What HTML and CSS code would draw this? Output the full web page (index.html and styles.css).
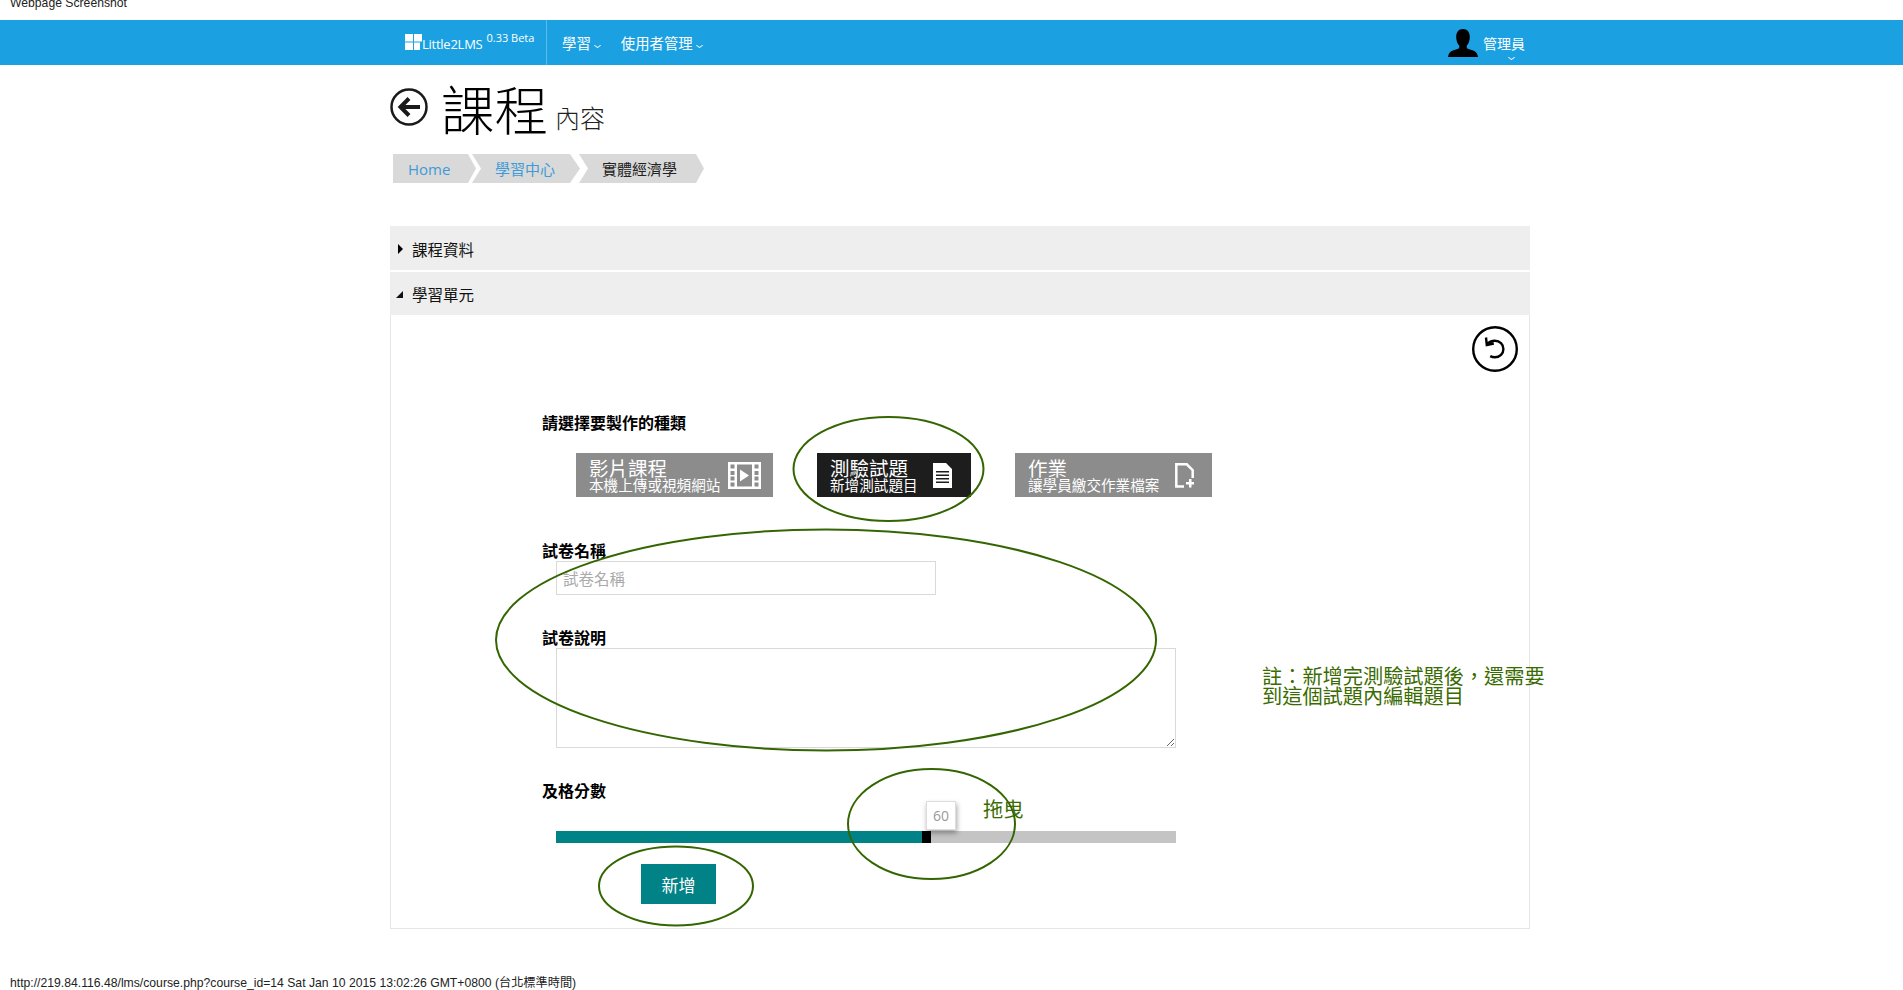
FILE: index.html
```html
<!DOCTYPE html>
<html lang="zh-Hant">
<head>
<meta charset="utf-8">
<title>課程內容</title>
<link rel="stylesheet" href="styles.css">
</head>
<body>
<p class="shot-caption">Webpage Screenshot</p>
<header class="topbar">
  <div class="topbar-inner">
    <a class="brand">
      <svg class="brand-logo" viewBox="0 0 17 16"><path fill="#fff" d="M0 0h8v7.500H0zM9 0h8v7.500H9zM0 8.500h8V16H0zM9 8.500h6V16H9z"/></svg>
      <span class="brand-name">Little2LMS</span><sup class="brand-ver">0.33 Beta</sup>
    </a>
    <nav class="menu">
      <a class="menu-item">學習<span class="caret"></span></a>
      <a class="menu-item">使用者管理<span class="caret"></span></a>
    </nav>
    <div class="user">
      <svg class="avatar" viewBox="0 0 30 28"><path fill="#000" d="M15 0c4.600 0 6.800 3.400 6.800 8 0 3.600-1.200 6.800-3 8.600v2.600c2 1.300 6 1.800 8.300 3.300 1.600 1 2.500 3 2.900 5.500H0c.4-2.500 1.300-4.500 2.900-5.500 2.300-1.500 6.300-2 8.300-3.300v-2.600c-1.800-1.800-3-5-3-8.600C8.200 3.400 10.400 0 15 0z"/></svg>
      <span class="user-name">管理員<span class="caret caret-below"></span></span>
    </div>
  </div>
</header>

<main class="page">
  <div class="title-row">
    <svg class="back-icon" viewBox="0 0 38 38"><circle cx="19" cy="19" r="17.500" fill="none" stroke="#1a1a1a" stroke-width="2.500"/><path fill="none" stroke="#1a1a1a" stroke-width="4" d="M30 19H11M19 10.500 10.500 19l8.500 8.500"/></svg>
    <h1 class="title">課程<small class="subtitle">內容</small></h1>
  </div>
  <ol class="crumbs">
    <li class="crumb crumb-first"><a class="crumb-link">Home</a></li>
    <li class="crumb crumb-second"><a class="crumb-link">學習中心</a></li>
    <li class="crumb crumb-third">實體經濟學</li>
  </ol>

  <section class="accordion">
    <h2 class="acc-head acc-closed"><span class="tri tri-right"></span>課程資料</h2>
    <h2 class="acc-head acc-open"><span class="tri tri-open"></span>學習單元</h2>
    <div class="acc-body">
      <div class="undo-row">
        <svg class="undo-icon" viewBox="0 0 46 46"><circle cx="23" cy="23" r="21.800" fill="none" stroke="#000" stroke-width="2.400"/><path fill="none" stroke="#000" stroke-width="2.400" d="M15 18.500c2-2.500 5-3.700 8-3.700 4.800 0 8.400 3.700 8.400 8.200s-3.600 8.300-8.400 8.300c-1.800 0-3.400-.4-4.800-1.200M14 11.500l.8 7.500 7-1.500"/></svg>
      </div>
      <form class="form">
        <label class="form-label label-type">請選擇要製作的種類</label>
        <div class="tiles">
          <a class="tile tile-video">
            <span class="tile-text"><span class="tile-title">影片課程</span><span class="tile-sub">本機上傳或視頻網站</span></span>
            <svg class="tile-icon icon-film" viewBox="0 0 33 27"><path fill="#fff" fill-rule="evenodd" d="M0 0h33v27H0zM2.500 2.500v4h4v-4zM2.500 9v4h4V9zM2.500 14.500v4h4v-4zM2.500 20.500v4h4v-4zM26.500 2.500v4h4v-4zM26.500 9v4h4V9zM26.500 14.500v4h4v-4zM26.500 20.500v4h4v-4zM9 2.500v22h15v-22z"/><path fill="#fff" d="M12 7.500 21 13.500 12 19.500z"/></svg>
          </a>
          <a class="tile tile-active">
            <span class="tile-text"><span class="tile-title">測驗試題</span><span class="tile-sub">新增測試題目</span></span>
            <svg class="tile-icon icon-doc" viewBox="0 0 19 25"><path fill="#fff" fill-rule="evenodd" d="M0 0h13l6 6v19H0zM3 8v1.500h13V8zM3 11.500V13h13v-1.500zM3 15v1.500h13V15zM3 18.500V20h13v-1.500z"/></svg>
          </a>
          <a class="tile tile-homework">
            <span class="tile-text"><span class="tile-title">作業</span><span class="tile-sub">讓學員繳交作業檔案</span></span>
            <svg class="tile-icon icon-add" viewBox="0 0 19 25"><path fill="none" stroke="#fff" stroke-width="2.500" d="M9 23.500H1.300V1.300h10.500l5.900 5.900V15"/><path fill="#fff" d="M14 16h2.500v3H19.500v2.500h-3v3H14v-3h-3V19h3z"/></svg>
          </a>
        </div>
        <label class="form-label label-name">試卷名稱</label>
        <input class="text-input" type="text" placeholder="試卷名稱">
        <label class="form-label label-desc">試卷說明</label>
        <textarea class="text-area"></textarea>
        <label class="form-label label-score">及格分數</label>
        <div class="slider">
          <div class="slider-fill" style="width:366px"></div>
          <div class="slider-handle"><span class="slider-tip">60</span></div>
        </div>
        <button class="submit" type="button">新增</button>
      </form>
    </div>
  </section>
</main>

<footer class="shot-footer">http://219.84.116.48/lms/course.php?course_id=14 Sat Jan 10 2015 13:02:26 GMT+0800 (台北標準時間)</footer>

<svg class="marks" viewBox="0 0 1903 990">
  <ellipse cx="888.500" cy="469" rx="95" ry="52"/>
  <ellipse cx="826" cy="640" rx="330" ry="110.500"/>
  <ellipse cx="931.500" cy="824" rx="83.500" ry="55"/>
  <ellipse cx="676" cy="886" rx="77" ry="39.500"/>
</svg>
<p class="note note-main">註：新增完測驗試題後，還需要<br>到這個試題內編輯題目</p>
<p class="note note-drag">拖曳</p>
</body>
</html>
```
FILE: styles.css
```css
* { box-sizing: border-box; }
html, body { margin: 0; padding: 0; }
body {
  position: relative;
  width: 1903px;
  height: 990px;
  overflow: hidden;
  background: #fff;
  color: #000;
  font-family: "Noto Sans CJK TC", "Liberation Sans", sans-serif;
}
.shot-caption {
  height: 20px;
  margin: 0;
  padding-left: 10px;
  font: 12.200px/7px "Liberation Sans", "Noto Sans CJK TC", sans-serif;
  color: #222;
  overflow: hidden;
}
.topbar { height: 45px; background: #1ba1e2; color: #fff; }
.topbar-inner {
  display: flex;
  align-items: stretch;
  width: 1140px;
  height: 45px;
  margin-left: 390px;
}
.brand {
  display: flex;
  align-items: flex-start;
  width: 157px;
  padding: 14px 0 0 15px;
  border-right: 1px solid #5cbbe9;
  font-family: "Open Sans", "Noto Sans CJK TC", sans-serif;
}
.brand-logo { width: 17px; height: 16px; flex: none; }
.brand-name { font-size: 13px; line-height: 20px; letter-spacing: -.25px; }
.brand-ver { font-size: 11px; line-height: 14px; margin: -3px 0 0 4px; }
.menu { display: flex; align-items: center; gap: 21px; padding-left: 15px; }
.menu-item { font-size: 14.400px; line-height: 20px; padding-top: 1px; }
.caret {
  display: inline-block;
  width: 5px;
  height: 5px;
  margin: 0 0 1px 4px;
  border-right: 1px solid #fff;
  border-bottom: 1px solid #fff;
  transform: scaleY(.7) rotate(45deg);
}
.user { display: flex; align-items: flex-start; margin-left: auto; padding: 9px 5px 0 0; }
.avatar { width: 30px; height: 28px; flex: none; margin-right: 5px; }
.user-name { position: relative; font-size: 14px; line-height: 20px; margin-top: 4px; }
.caret-below { position: absolute; left: 26px; top: 22px; margin: 0; }

.page { width: 1140px; margin-left: 390px; }
.title-row { display: flex; align-items: flex-start; height: 89px; }
.back-icon { width: 38px; height: 38px; flex: none; margin-top: 23px; }
.title {
  margin: 8px 0 0 13px;
  font-size: 53.500px;
  line-height: 70px;
  font-weight: 300;
}
.subtitle { font-size: 25px; font-weight: 300; margin-left: 7px; color: #222; vertical-align: 3px; }
.crumbs { display: flex; height: 29px; margin: 0 0 43px 3px; padding: 0; list-style: none; }
.crumb {
  display: flex;
  align-items: center;
  height: 29px;
  background: #d9d9d9;
  font-size: 15px;
  color: #222;
}
.crumb-link { color: #3f9bd6; }
.crumb-first {
  width: 83px;
  padding-left: 15px;
  clip-path: polygon(0 0, 75px 0, 100% 50%, 75px 100%, 0 100%);
}
.crumb-first .crumb-link { font-family: "Open Sans", sans-serif; }
.crumb-second {
  width: 108px;
  margin-left: -4px;
  padding-left: 23px;
  clip-path: polygon(0 0, 98px 0, 100% 50%, 98px 100%, 0 100%, 9px 50%);
}
.crumb-third {
  width: 125px;
  margin-left: -1px;
  padding-left: 23px;
  clip-path: polygon(0 0, 117px 0, 100% 50%, 117px 100%, 0 100%, 9px 50%);
}
.accordion { width: 1140px; }
.acc-head {
  display: flex;
  align-items: center;
  margin: 0;
  padding-top: 1px;
  background: #eee;
  font-size: 15.500px;
  font-weight: 400;
  color: #111;
}
.acc-closed { height: 44px; margin-bottom: 2px; }
.acc-open { height: 43px; }
.tri { display: block; width: 0; height: 0; margin: 0 9px 0 8px; }
.tri-right { border-left: 5px solid #000; border-top: 5px solid transparent; border-bottom: 5px solid transparent; }
.tri-open { margin-left: 6px; margin-right: 9px; border-left: 7px solid transparent; border-bottom: 7px solid #111; }
.acc-body { border: 1px solid #e6e6e6; border-top: 0; height: 614px; }
.undo-row { display: flex; justify-content: flex-end; padding: 11px 11px 0 0; }
.undo-icon { width: 46px; height: 46px; }
.form { display: flex; flex-direction: column; align-items: flex-start; padding-left: 151px; }
.form-label { font-size: 16px; line-height: 20px; font-weight: 700; }
.label-type { margin-top: 40px; }
.label-name { margin-top: 43px; }
.label-desc { margin-top: 32px; }
.label-score { margin-top: 32px; }
.tiles { display: flex; gap: 44px; margin: 21px 0 0 34px; }
.tile {
  display: flex;
  justify-content: space-between;
  align-items: center;
  height: 44px;
  padding: 0 12px 0 13px;
  background: #8c8c8c;
  color: #fff;
}
.tile-video { width: 197px; }
.tile-active { width: 154px; background: #1d1d1d; }
.tile-homework { width: 197px; padding-right: 18px; }
.tile-text { display: flex; flex-direction: column; }
.tile-title { font-size: 19.500px; line-height: 20px; }
.tile-sub { font-size: 14.600px; line-height: 14px; white-space: nowrap; }
.tile-icon { flex: none; }
.icon-film { width: 33px; height: 27px; }
.icon-doc { width: 19px; height: 25px; margin-right: 7px; }
.icon-add { width: 19px; height: 25px; }
.text-input {
  width: 380px;
  height: 34px;
  margin: 1px 0 0 14px;
  padding: 0 6px;
  border: 1px solid #d9d9d9;
  outline: 0;
  font: 15.500px "Noto Sans CJK TC", sans-serif;
}
.text-input::placeholder { color: #aaa; }
.text-area {
  display: block;
  width: 620px;
  height: 100px;
  margin: 1px 0 0 14px;
  border: 1px solid #d9d9d9;
  outline: 0;
}
.slider {
  position: relative;
  display: flex;
  width: 620px;
  height: 12px;
  margin: 31px 0 0 14px;
  background: #c4c4c4;
}
.slider-fill { background: #008287; }
.slider-handle { position: relative; width: 9px; background: #000; }
.slider-tip {
  position: absolute;
  left: 4px;
  bottom: 13px;
  width: 30px;
  height: 29px;
  background: #fff;
  border: 1px solid #ddd;
  box-shadow: 1px 3px 5px rgba(0, 0, 0, .35);
  font: 14px/27px "Open Sans", sans-serif;
  color: #999;
  text-align: center;
}
.submit {
  width: 75px;
  height: 40px;
  margin: 21px 0 0 99px;
  padding: 0;
  border: 0;
  background: #008287;
  color: #fff;
  font: 17px "Noto Sans CJK TC", sans-serif;
}
.shot-footer {
  margin: 47px 0 0 10px;
  font: 12.200px/14px "Liberation Sans", "Noto Sans CJK TC", sans-serif;
  color: #222;
}
.marks { position: absolute; left: 0; top: 0; width: 1903px; height: 990px; pointer-events: none; }
.marks ellipse { fill: none; stroke: #336600; stroke-width: 2; }
.note {
  position: absolute;
  margin: 0;
  font-size: 20.200px;
  line-height: 20px;
  color: #3a6b00;
}
.note-main { left: 1262px; top: 666px; white-space: nowrap; }
.note-drag { left: 983px; top: 799px; }
```
